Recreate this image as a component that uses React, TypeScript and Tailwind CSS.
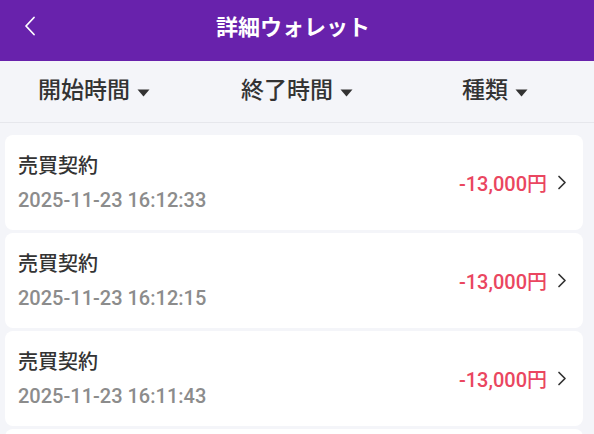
import React from "react";

const font = { fontFamily: 'Roboto, "Noto Sans CJK JP", sans-serif' };

function Caret() {
  return (
    <svg width="13" height="8" viewBox="0 0 13 8" className="ml-[7px] mt-[2px]">
      <path d="M0.5 0.5 H12.5 L6.5 7.5 Z" fill="#333333" />
    </svg>
  );
}

function Chevron() {
  return (
    <svg width="10" height="15" viewBox="0 0 10 15" className="ml-[10px]">
      <path d="M2 1.5 L8 7.5 L2 13.5" fill="none" stroke="#333333" strokeWidth="1.7" strokeLinecap="round" strokeLinejoin="round" />
    </svg>
  );
}

const rows = ["2025-11-23 16:12:33", "2025-11-23 16:12:15", "2025-11-23 16:11:43"];

export default function App() {
  return (
    <div className="w-[594px] h-[434px] overflow-hidden bg-[#f4f5f9]" style={font}>
      <div className="relative h-[61px] bg-[#6822ac] flex items-center justify-center pb-[6px] pr-[8px]">
        <svg width="12" height="20" viewBox="0 0 12 20" className="absolute left-[24px] top-[16px]">
          <path d="M10 1.5 L2 10 L10 18.5" fill="none" stroke="#ffffff" strokeWidth="1.8" strokeLinecap="round" strokeLinejoin="round" />
        </svg>
        <span className="text-white text-[22px] font-bold">詳細ウォレット</span>
      </div>
      <div className="h-[62px] grid grid-cols-3 items-center border-b border-[#e6e7ec]">
        {["開始時間", "終了時間", "種類"].map((t, i) => (
          <div key={t} className={`flex items-center justify-center ${i === 0 ? "pr-[10px]" : ""}`}>
            <span className="text-[23px] font-medium text-[#333333]">{t}</span>
            <Caret />
          </div>
        ))}
      </div>
      <div className="flex flex-col gap-[3px] pl-[5px] pr-[11px] pt-[12px]">
        {rows.map((d) => (
          <div key={d} className="h-[95px] shrink-0 bg-white rounded-[8px] flex items-center pl-[13px] pr-[16px]">
            <div className="flex-1 flex flex-col">
              <span className="text-[20px] font-medium text-[#333333] leading-[24px]">売買契約</span>
              <span className="text-[20px] font-medium text-[#8c8c8c] leading-[24px] mt-[10px]">{d}</span>
            </div>
            <span className="text-[20px] font-medium text-[#ea4660] mt-[3px]">-13,000円</span>
            <Chevron />
          </div>
        ))}
        <div className="h-[95px] shrink-0 bg-white rounded-[8px]" />
      </div>
    </div>
  );
}
